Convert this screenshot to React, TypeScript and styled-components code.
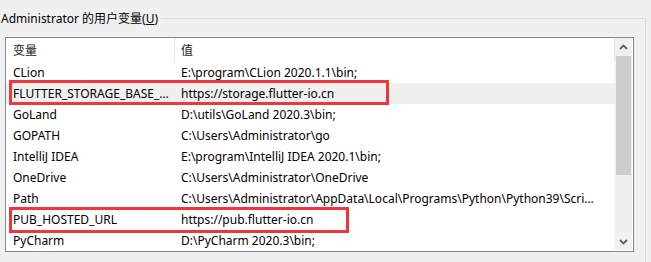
import React from "react";
import styled, { createGlobalStyle } from "styled-components";

const rows: [string, string][] = [
  ["CLion", "E:\\program\\CLion 2020.1.1\\bin;"],
  ["FLUTTER_STORAGE_BASE_URL", "https://storage.flutter-io.cn"],
  ["GoLand", "D:\\utils\\GoLand 2020.3\\bin;"],
  ["GOPATH", "C:\\Users\\Administrator\\go"],
  ["IntelliJ IDEA", "E:\\program\\IntelliJ IDEA 2020.1\\bin;"],
  ["OneDrive", "C:\\Users\\Administrator\\OneDrive"],
  ["Path", "C:\\Users\\Administrator\\AppData\\Local\\Programs\\Python\\Python39\\Scripts\\;C:\\Users"],
  ["PUB_HOSTED_URL", "https://pub.flutter-io.cn"],
  ["PyCharm", "D:\\PyCharm 2020.3\\bin;"],
];

export default function App() {
  return (
    <>
      <GlobalStyle />
      <Group>
        <Legend>
          Administrator 的用户变量(<u>U</u>)
        </Legend>
        <ListBox>
          <Table>
            <HeaderRow>
              <HeaderCell>变量</HeaderCell>
              <HeaderCell>值</HeaderCell>
            </HeaderRow>
            {rows.map(([name, value], i) => (
              <Row key={name} $hover={i === 1}>
                <NameCell>{name}</NameCell>
                <ValueCell>{value}</ValueCell>
              </Row>
            ))}
            <Mark style={{ left: 3, top: 42, width: 380, height: 25 }} />
            <Mark style={{ left: 3, top: 169, width: 340, height: 26 }} />
          </Table>
          <ScrollBar>
            <Arrow>
              <svg width="9" height="6" viewBox="0 0 9 6">
                <path d="M1 5 L4.5 1.5 L8 5" fill="none" stroke="#606060" strokeWidth="1.8" />
              </svg>
            </Arrow>
            <Thumb />
            <Track />
            <Arrow>
              <svg width="9" height="6" viewBox="0 0 9 6">
                <path d="M1 1 L4.5 4.5 L8 1" fill="none" stroke="#606060" strokeWidth="1.8" />
              </svg>
            </Arrow>
          </ScrollBar>
        </ListBox>
      </Group>
    </>
  );
}

const GlobalStyle = createGlobalStyle`
  * {
    box-sizing: border-box;
  }
  html, body {
    margin: 0;
    padding: 0;
    height: 262px;
    overflow: hidden;
    background: #f0f0f0;
    font-family: "Noto Sans", "Noto Sans CJK SC", sans-serif;
    font-size: 12px;
    color: #000;
  }
`;

const Group = styled.fieldset`
  margin: 10px 0 0 0;
  padding: 0 0 10px 0;
  width: 646px;
  min-width: 0;
  border: 1px solid #dcdcdc;
  border-left: none;
  border-bottom: none;
`;

const Legend = styled.legend`
  padding: 1px 3px 0 1px;
  line-height: 15px;
  height: 16px;
  color: #000;
`;

const ListBox = styled.div`
  margin: 11px 11px 0 5px;
  height: 215px;
  border: 1px solid #828790;
  background: #fff;
  display: flex;
  padding-right: 1px;
`;

const Table = styled.div`
  position: relative;
  flex: 1;
  overflow: hidden;
`;

const HeaderRow = styled.div`
  display: grid;
  grid-template-columns: 169px 1fr;
  height: 24px;
  border-right: 1px solid #e5e5e5;
`;

const HeaderCell = styled.div`
  line-height: 23px;
  padding: 1px 0 0 7px;
  color: #1a1a1a;
  &:first-child {
    border-right: 1px solid #e5e5e5;
  }
  &:last-child {
    padding-left: 6px;
  }
`;

const Row = styled.div<{ $hover?: boolean }>`
  display: grid;
  grid-template-columns: 169px 1fr;
  height: 21px;
  background: ${({ $hover }) => ($hover ? "#f0f0f0" : "#fff")};
`;

const Cell = styled.div`
  line-height: 20px;
  padding-top: 1px;
  white-space: nowrap;
  overflow: hidden;
  text-overflow: ellipsis;
`;

const NameCell = styled(Cell)`
  padding-left: 7px;
  padding-right: 3px;
`;

const ValueCell = styled(Cell)`
  padding-left: 6px;
  padding-right: 14px;
`;

const Mark = styled.div`
  position: absolute;
  border: 3px solid #f0363b;
  pointer-events: none;
`;

const ScrollBar = styled.div`
  width: 17px;
  background: #f0f0f0;
  display: flex;
  flex-direction: column;
  margin-bottom: 1px;
`;

const Arrow = styled.div`
  height: 17px;
  display: flex;
  align-items: center;
  justify-content: center;
`;

const Thumb = styled.div`
  height: 119px;
  margin: 1px 1px 0;
  background: #cdcdcd;
`;

const Track = styled.div`
  flex: 1;
`;
